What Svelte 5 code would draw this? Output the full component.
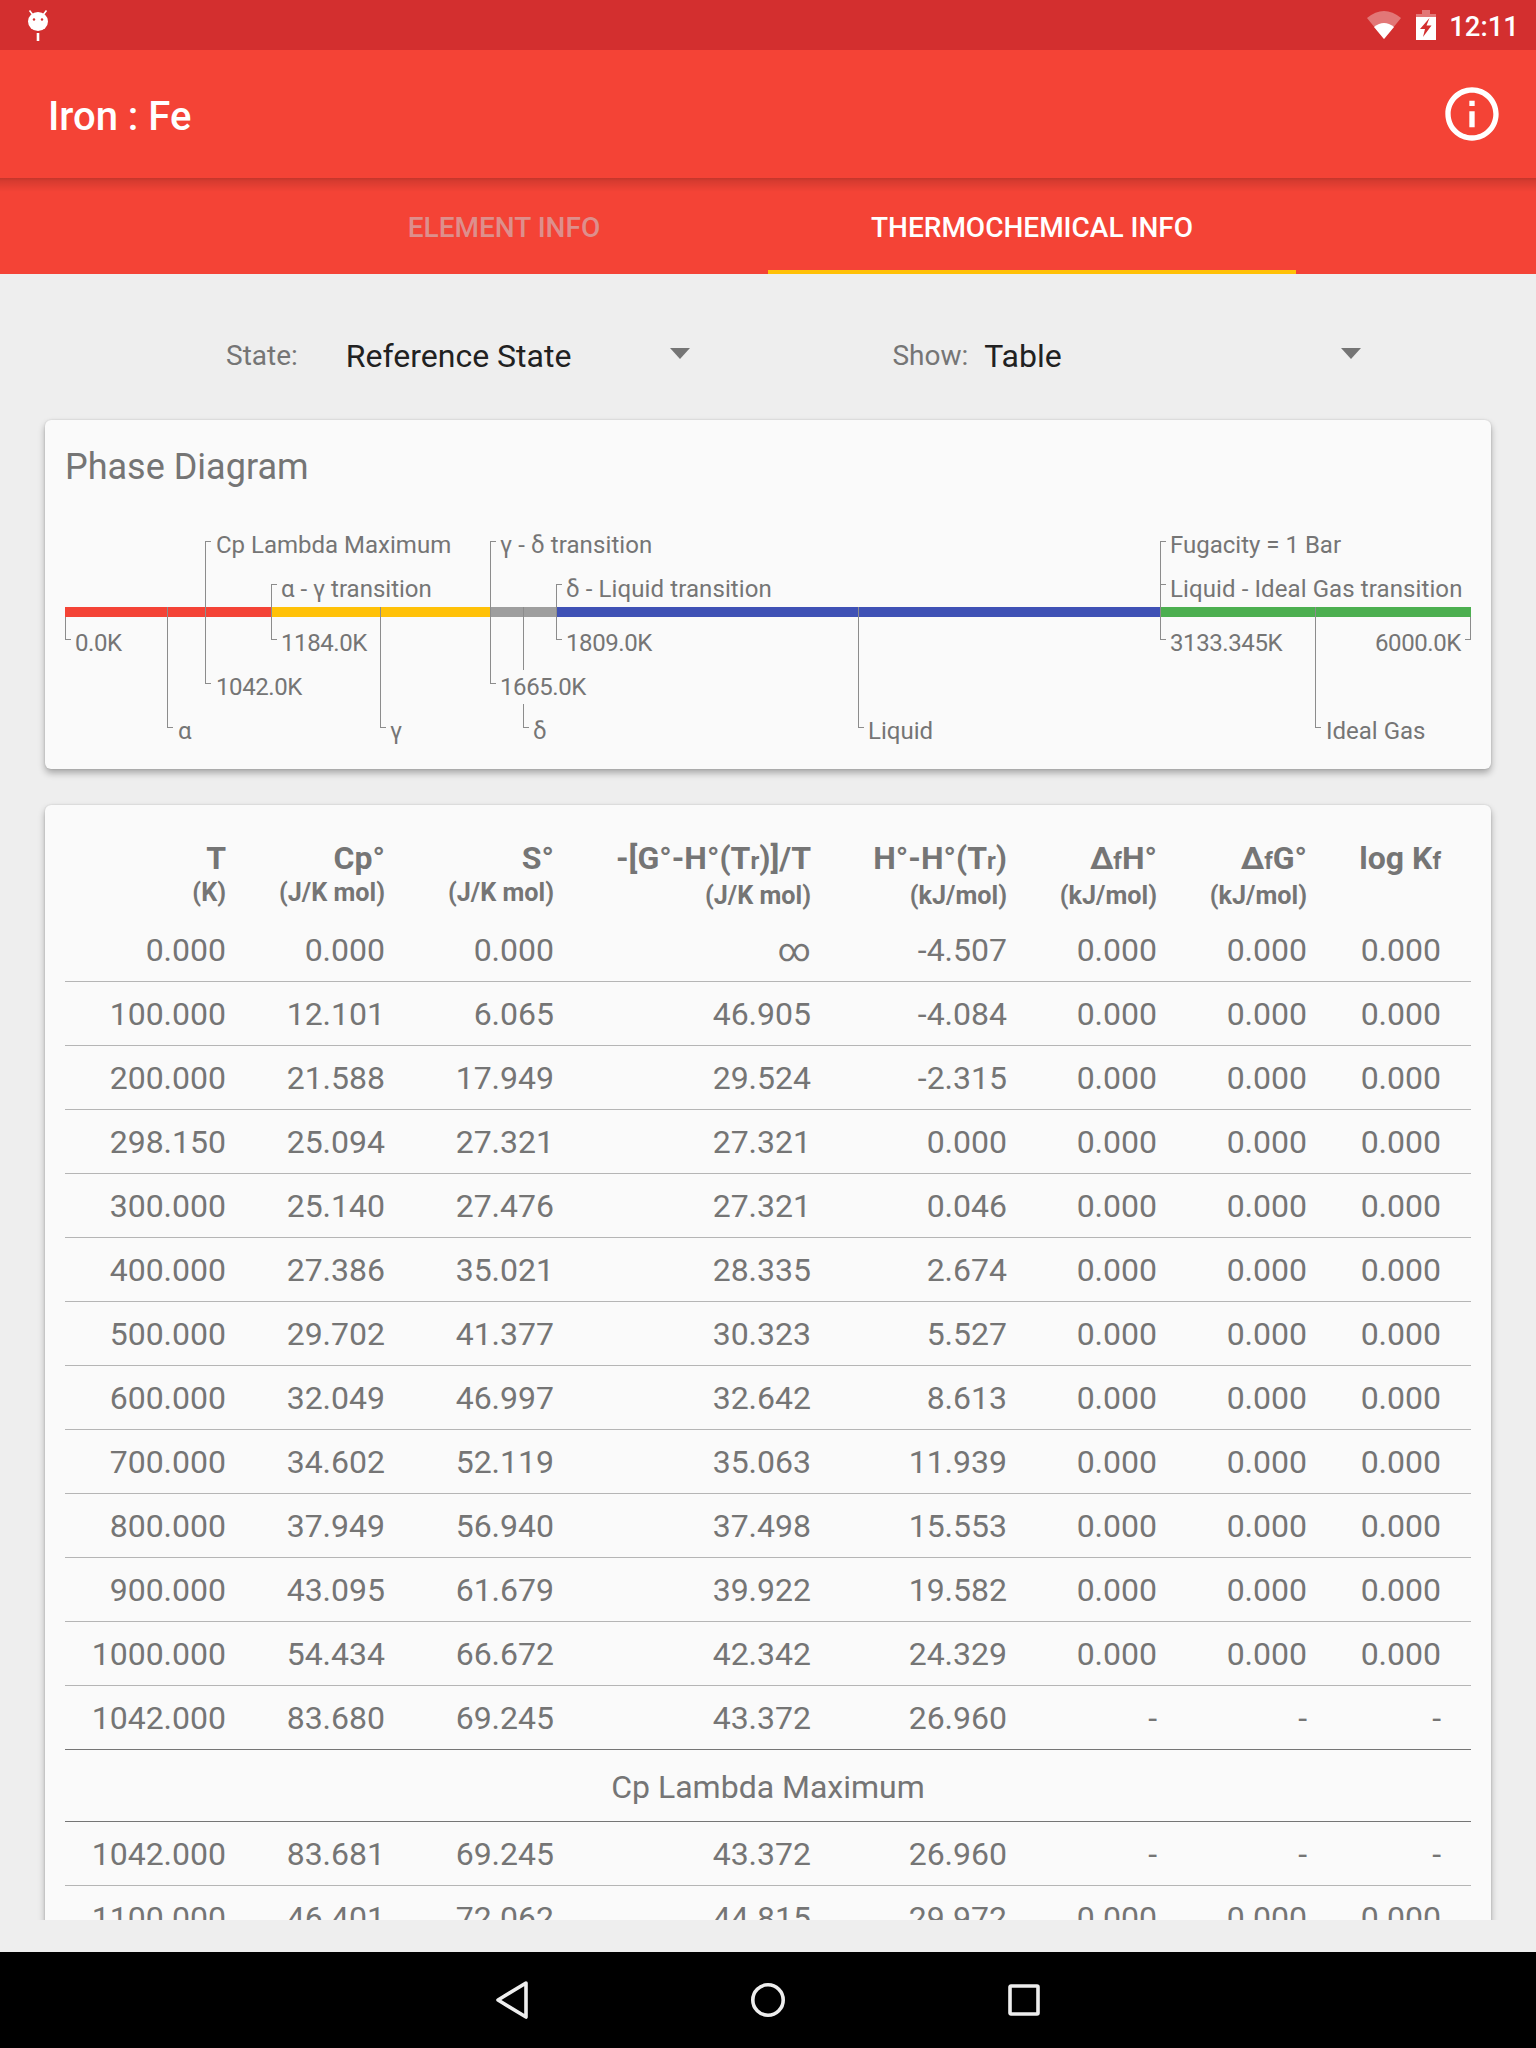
<script>
  const ox = 65, oy = 520;
  const segments = [
    { w: 206, c: '#f44336' },
    { w: 219, c: '#ffc107' },
    { w: 66, c: '#9e9e9e' },
    { w: 604, c: '#3f51b5' },
    { w: 311, c: '#4caf50' }
  ];
  const connectors = [
    { x: 65, y1: 617, y2: 639, ticks: [639] },
    { x: 167, y1: 607, y2: 727, ticks: [727] },
    { x: 205, y1: 541, y2: 683, ticks: [541, 683] },
    { x: 271, y1: 584, y2: 639, ticks: [584, 639] },
    { x: 380, y1: 607, y2: 727, ticks: [727] },
    { x: 490, y1: 541, y2: 683, ticks: [541, 683] },
    { x: 523, y1: 607, y2: 727, ticks: [727] },
    { x: 556, y1: 584, y2: 639, ticks: [584, 639] },
    { x: 858, y1: 607, y2: 727, ticks: [727] },
    { x: 1160, y1: 541, y2: 639, ticks: [541, 584, 639] },
    { x: 1315, y1: 607, y2: 727, ticks: [727] },
    { x: 1470, y1: 617, y2: 639, ticks: [639], left: true }
  ];
  const labels = [
    { t: 'Cp Lambda Maximum', x: 216, y: 545 },
    { t: 'α - γ transition', x: 281, y: 589 },
    { t: 'γ - δ transition', x: 500, y: 545, k: 'wide' },
    { t: 'δ - Liquid transition', x: 566, y: 589, k: 'wide' },
    { t: 'Fugacity = 1 Bar', x: 1170, y: 545 },
    { t: 'Liquid - Ideal Gas transition', x: 1170, y: 589, k: 'wide' },
    { t: '0.0K', x: 75, y: 643, k: 'num' },
    { t: '1184.0K', x: 281, y: 643, k: 'num' },
    { t: '1809.0K', x: 566, y: 643, k: 'num' },
    { t: '3133.345K', x: 1170, y: 643, k: 'num' },
    { t: '1042.0K', x: 216, y: 687, k: 'num' },
    { t: '1665.0K', x: 500, y: 687, k: 'num', bg: true },
    { t: 'α', x: 178, y: 731 },
    { t: 'γ', x: 390, y: 731 },
    { t: 'δ', x: 533, y: 731 },
    { t: 'Liquid', x: 868, y: 731 },
    { t: 'Ideal Gas', x: 1326, y: 731 }
  ];
  const Z = ['0.000', '0.000', '0.000'];
  const D = ['-', '-', '-'];
  const rows1 = [
    ['0.000', '0.000', '0.000', '∞', '-4.507', ...Z],
    ['100.000', '12.101', '6.065', '46.905', '-4.084', ...Z],
    ['200.000', '21.588', '17.949', '29.524', '-2.315', ...Z],
    ['298.150', '25.094', '27.321', '27.321', '0.000', ...Z],
    ['300.000', '25.140', '27.476', '27.321', '0.046', ...Z],
    ['400.000', '27.386', '35.021', '28.335', '2.674', ...Z],
    ['500.000', '29.702', '41.377', '30.323', '5.527', ...Z],
    ['600.000', '32.049', '46.997', '32.642', '8.613', ...Z],
    ['700.000', '34.602', '52.119', '35.063', '11.939', ...Z],
    ['800.000', '37.949', '56.940', '37.498', '15.553', ...Z],
    ['900.000', '43.095', '61.679', '39.922', '19.582', ...Z],
    ['1000.000', '54.434', '66.672', '42.342', '24.329', ...Z],
    ['1042.000', '83.680', '69.245', '43.372', '26.960', ...D]
  ];
  const rows2 = [
    ['1042.000', '83.681', '69.245', '43.372', '26.960', ...D],
    ['1100.000', '46.401', '72.062', '44.815', '29.972', ...Z]
  ];
</script>

<div class="screen">
  <div class="status">
    <svg class="bug" viewBox="0 0 60 50" width="60" height="50">
      <path d="M14.5 10.5 L18 15 M31.5 10.5 L28 15" stroke="#fff" stroke-width="1.6" fill="none" />
      <ellipse cx="23" cy="21.5" rx="10" ry="9.5" fill="#fff" />
      <circle cx="19" cy="19.5" r="1.2" fill="#d32f2f" />
      <circle cx="27" cy="19.5" r="1.2" fill="#d32f2f" />
      <rect x="21.7" y="33" width="2.6" height="8" fill="#fff" />
    </svg>
    <div class="status-right">
      <svg viewBox="0 0 36 30" width="36" height="30">
        <path d="M18 29 L1 8 Q18 -6 35 8 Z" fill="#fff" opacity="0.35" />
        <path d="M18 29 L8 17 Q18 9 28 17 Z" fill="#fff" />
      </svg>
      <svg class="batt" viewBox="0 0 20 30" width="20" height="30">
        <path d="M0 4h6V0h8v4h6v6H0z" fill="#fff" opacity="0.35" />
        <path d="M0 7h20v23H0z" fill="#fff" />
        <path d="M13.5 8 L4 19 H9 L7 27 L15.5 15.5 H10.5 Z" fill="#d32f2f" />
      </svg>
      <span class="clock">12:11</span>
    </div>
  </div>

  <header class="toolbar">
    <h1>Iron : Fe</h1>
    <svg class="info" viewBox="0 0 24 24" width="64" height="64">
      <path fill="#fff" d="M11 17h2v-6h-2v6zm1-15C6.48 2 2 6.48 2 12s4.48 10 10 10 10-4.48 10-10S17.52 2 12 2zm0 18c-4.41 0-8-3.59-8-8s3.59-8 8-8 8 3.59 8 8-3.59 8-8 8zM11 9h2V7h-2v2z" />
    </svg>
  </header>

  <nav class="tabs">
    <div class="tab dim">ELEMENT INFO</div>
    <div class="tab active">THERMOCHEMICAL INFO</div>
  </nav>

  <main class="content">
    <div class="spinners">
      <span class="lab lab-state">State:</span>
      <span class="val val-state">Reference State</span>
      <span class="arrow arrow-state"></span>
      <span class="lab lab-show">Show:</span>
      <span class="val val-show">Table</span>
      <span class="arrow arrow-show"></span>
    </div>

    <section class="card diagram">
      <h2>Phase Diagram</h2>
      <div class="stage">
        <div class="bar">
          {#each segments as s}
            <div style="width:{s.w}px;background:{s.c}"></div>
          {/each}
        </div>
        <svg class="wires" width="1406" height="249" viewBox="{ox} {oy} 1406 249">
          {#each connectors as c}
            <path d="M{c.x + 0.5} {c.y1}V{c.y2 + 1}" />
            {#each c.ticks as t}
              <path d="M{c.x + (c.left ? -5 : 0)} {t + 0.5}h6" />
            {/each}
          {/each}
        </svg>
        {#each labels as l}
          <span class="dl {l.k ?? ''}" class:bg={l.bg} style="left:{l.x - ox}px;top:{l.y - oy - 17}px">{l.t}</span>
        {/each}
        <span class="dl num right" style="top:{643 - oy - 17}px">6000.0K</span>
      </div>
    </section>

    <section class="card table">
      <div class="row head">
        <div>T<small>(K)</small></div>
        <div>Cp°<small>(J/K mol)</small></div>
        <div>S°<small>(J/K mol)</small></div>
        <div>-[G°-H°(T<i>r</i>)]/T<small>(J/K mol)</small></div>
        <div>H°-H°(T<i>r</i>)<small>(kJ/mol)</small></div>
        <div>Δ<i>f</i>H°<small>(kJ/mol)</small></div>
        <div>Δ<i>f</i>G°<small>(kJ/mol)</small></div>
        <div class="logk">log K<i>f</i></div>
      </div>
      {#each rows1 as r, i}
        <div class="row data" class:dark={i === rows1.length - 1}>
          {#each r as v}<div>{v}</div>{/each}
        </div>
      {/each}
      <div class="note">Cp Lambda Maximum</div>
      {#each rows2 as r}
        <div class="row data">
          {#each r as v}<div>{v}</div>{/each}
        </div>
      {/each}
    </section>
  </main>

  <footer class="navbar">
    <svg viewBox="0 0 36 40" width="36" height="40">
      <path d="M32 3 L4 20 L32 37 Z" fill="none" stroke="#eee" stroke-width="3.6" stroke-linejoin="round" />
    </svg>
    <svg viewBox="0 0 36 36" width="36" height="36">
      <circle cx="18" cy="18" r="15.2" fill="none" stroke="#eee" stroke-width="3.6" />
    </svg>
    <svg viewBox="0 0 36 36" width="36" height="36">
      <rect x="4" y="4" width="28" height="28" rx="1" fill="none" stroke="#eee" stroke-width="3.6" />
    </svg>
  </footer>
</div>

<style>
  :global(body) { margin: 0; background: #eeeeee; }
  .screen {
    width: 1536px; height: 2048px; display: flex; flex-direction: column;
    font-family: Roboto, "Liberation Sans", sans-serif; overflow: hidden; color: #757575;
  }
  .status {
    height: 50px; flex: none; background: #d32f2f; display: flex;
    justify-content: space-between; align-items: flex-start;
  }
  .bug { margin-left: 15px; }
  .status-right { display: flex; align-items: flex-start; padding: 10px 17px 0 0; color: #fff; }
  .status-right svg { display: block; }
  .batt { margin-left: 14px; }
  .clock { margin-left: 13px; font-size: 27.5px; line-height: 32px; font-weight: 500; margin-top: 1px; }
  .toolbar {
    height: 128px; flex: none; background: #f44336; display: flex; align-items: center;
    justify-content: space-between; padding: 0 32px 0 48px; box-sizing: border-box;
  }
  .toolbar h1 { margin: 4px 0 0; font-size: 40px; font-weight: 500; color: #fff; }
  .info { display: block; margin-right: 0; }
  .tabs {
    height: 96px; flex: none; display: flex; padding-left: 240px; box-sizing: border-box;
    background: linear-gradient(rgba(0,0,0,.2), rgba(0,0,0,.12) 3px, rgba(0,0,0,0) 14px), #f44336;
  }
  .tab {
    width: 528px; box-sizing: border-box; text-align: center; font-size: 28px; font-weight: 500;
    line-height: 100px; height: 96px;
  }
  .tab.dim { color: #dd8f8c; }
  .tab.active { color: #fff; border-bottom: 4px solid #ffc107; }
  .content { height: 1646px; flex: none; overflow: hidden; background: #eeeeee; padding: 0 45px; box-sizing: border-box; margin-bottom: 32px; }
  .spinners { height: 146px; position: relative; display: flex; align-items: center; padding-top: 18px; box-sizing: border-box; }
  .lab { font-size: 28px; line-height: 40px; }
  .val { font-size: 32px; line-height: 40px; color: #212121; }
  .lab-state { margin-left: 181px; }
  .val-state { margin-left: 48px; }
  .arrow {
    width: 0; height: 0; border-left: 10px solid transparent; border-right: 10px solid transparent;
    border-top: 11px solid #757575; margin-top: -6px;
  }
  .arrow-state { margin-left: 99px; }
  .lab-show { margin-left: 202px; }
  .val-show { margin-left: 16px; }
  .arrow-show { margin-left: 279px; }
  .card {
    background: #fafafa; border-radius: 6px;
    box-shadow: 0 4px 7px rgba(0,0,0,.3), 0 0 2px rgba(0,0,0,.15);
  }
  .diagram { height: 349px; padding: 0 20px; box-sizing: border-box; }
  .diagram h2 { margin: 0; height: 100px; font-size: 36px; font-weight: 400; line-height: 94px; }
  .stage { position: relative; height: 249px; width: 1406px; }
  .bar { position: absolute; left: 0; top: 87px; display: flex; height: 10px; width: 1406px; }
  .wires { position: absolute; left: 0; top: 0; }
  .wires path { stroke: #8c8c8c; stroke-width: 1; fill: none; }
  .dl { position: absolute; font-size: 24px; line-height: 34px; white-space: nowrap; }
  .dl.num { letter-spacing: -0.4px; }
  .dl.wide { letter-spacing: 0.1px; }
  .dl.bg { background: #fafafa; }
  .dl.right { right: 10px; }
  .table { margin-top: 36px; padding: 0 20px; height: 1200px; }
  .row {
    display: grid; grid-template-columns: 161px 159px 169px 257px 196px 150px 150px 134px;
    padding-right: 30px; text-align: right; box-sizing: border-box;
  }
  .head { height: 113px; padding-top: 33px; font-size: 32px; font-weight: 700; line-height: 40px; }
  .head small { display: block; font-size: 25.2px; line-height: 29px; margin-top: 0; }
  .head i { font-style: normal; font-size: 24px; }
  .logk { white-space: nowrap; }
  .data {
    height: 64px; line-height: 64px; font-size: 32px; border-bottom: 1px solid #b5b5b5;
  }
  .data.dark { border-bottom-color: #757575; }
  .note {
    height: 72px; line-height: 74px; font-size: 32px; text-align: center;
    border-bottom: 1px solid #757575; box-sizing: border-box;
  }
  .navbar {
    height: 96px; flex: none; background: #000; position: relative; display: flex; align-items: center;
    justify-content: center; gap: 220px;
  }
  .navbar svg { display: block; }
</style>
